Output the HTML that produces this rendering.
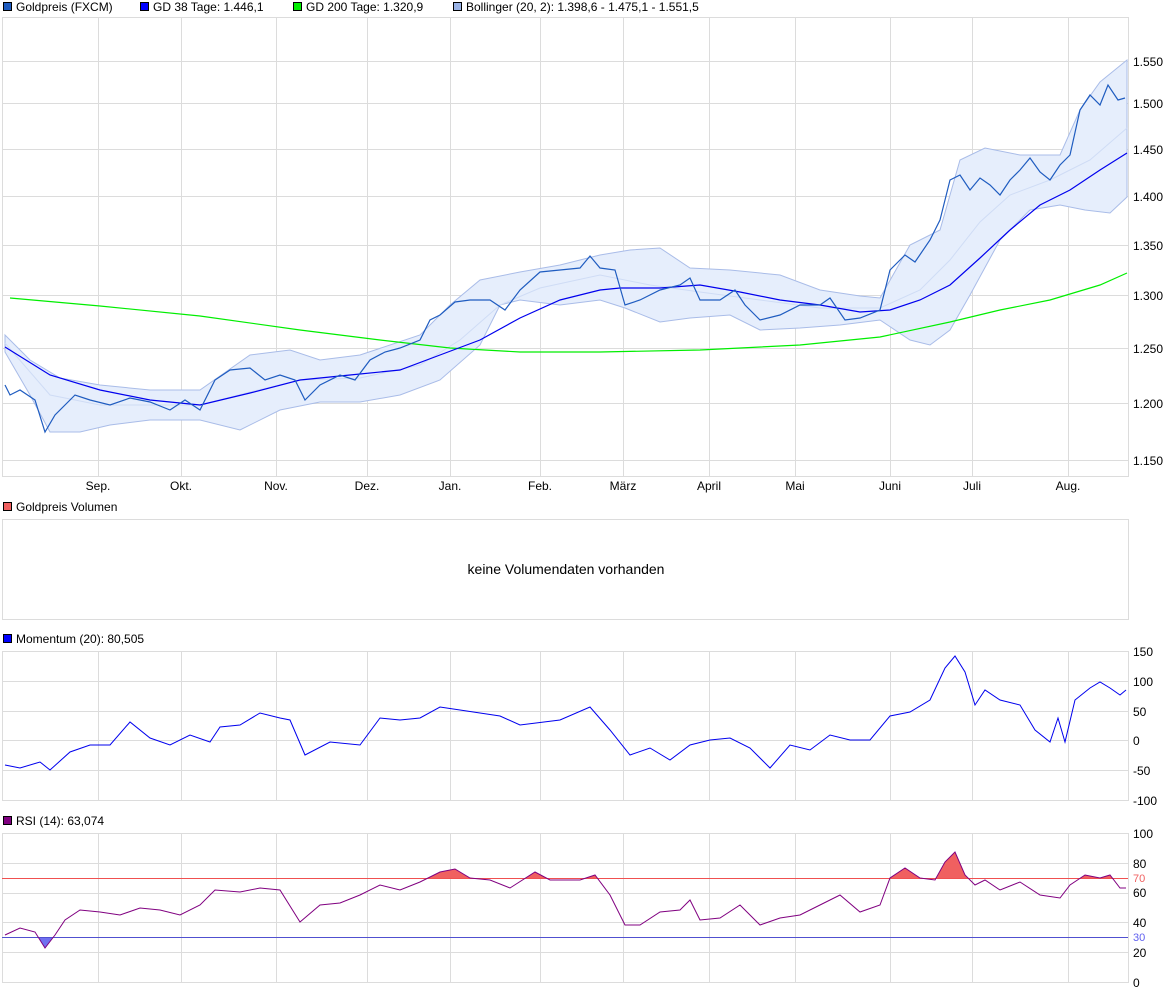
<!DOCTYPE html>
<html><head><meta charset="utf-8"><style>
body{margin:0;background:#fff;font-family:"Liberation Sans",sans-serif;}
svg text{font-family:"Liberation Sans",sans-serif;font-size:12px;fill:#000}
</style></head><body>
<svg width="1175" height="994" viewBox="0 0 1175 994" xmlns="http://www.w3.org/2000/svg">
<defs>
<clipPath id="above"><rect x="0" y="820" width="1130" height="58"/></clipPath>
<clipPath id="below"><rect x="0" y="937" width="1130" height="50"/></clipPath>
</defs>
<!-- legend -->
<rect x="3.5" y="2.5" width="8" height="8" fill="#1f5cc0" stroke="#000"/><text x="16" y="11">Goldpreis (FXCM)</text>
<rect x="140.5" y="2.5" width="8" height="8" fill="#0000ff" stroke="#000"/><text x="153" y="11">GD 38 Tage: 1.446,1</text>
<rect x="293.5" y="2.5" width="8" height="8" fill="#00ee00" stroke="#000"/><text x="306" y="11">GD 200 Tage: 1.320,9</text>
<rect x="453.5" y="2.5" width="8" height="8" fill="#9ab3e6" stroke="#000"/><text x="466" y="11">Bollinger (20, 2): 1.398,6 - 1.475,1 - 1.551,5</text>
<g stroke="#dcdcdc" stroke-width="1">
<rect x="2.5" y="17.5" width="1126" height="459" fill="none"/>
<rect x="2.5" y="519.5" width="1126" height="100" fill="none"/>
<rect x="2.5" y="651.5" width="1126" height="149" fill="none"/>
<rect x="2.5" y="833.5" width="1126" height="149" fill="none"/>
<path d="M98.5 17V476M181.5 17V476M276.5 17V476M367.5 17V476M450.5 17V476M540.5 17V476M623.5 17V476M709.5 17V476M795.5 17V476M890.5 17V476M972.5 17V476M1068.5 17V476"/>
<path d="M98.5 651V800M181.5 651V800M276.5 651V800M367.5 651V800M450.5 651V800M540.5 651V800M623.5 651V800M709.5 651V800M795.5 651V800M890.5 651V800M972.5 651V800M1068.5 651V800"/>
<path d="M98.5 833V982M181.5 833V982M276.5 833V982M367.5 833V982M450.5 833V982M540.5 833V982M623.5 833V982M709.5 833V982M795.5 833V982M890.5 833V982M972.5 833V982M1068.5 833V982"/>
<path d="M2 61.5H1128M2 103.5H1128M2 149.5H1128M2 196.5H1128M2 245.5H1128M2 295.5H1128M2 348.5H1128M2 403.5H1128M2 460.5H1128"/>
<path d="M2 681.5H1128M2 711.5H1128M2 740.5H1128M2 770.5H1128"/>
<path d="M2 863.5H1128M2 893.5H1128M2 922.5H1128M2 952.5H1128"/>
</g>
<!-- bollinger -->
<polygon fill="#e6eefc" stroke="#a9bce8" stroke-width="1" points="5,335 30,360 60,378 100,385 150,390 200,390 250,355 290,350 320,360 360,355 420,335 450,305 480,280 520,272 560,265 600,255 630,250 660,248 690,268 730,270 780,275 820,290 860,296 880,298 910,245 940,230 960,160 985,148 1020,155 1060,155 1080,110 1100,82 1127,60 1127,197 1110,213 1085,210 1060,205 1030,210 1000,240 970,295 950,330 930,345 910,340 880,320 840,325 800,328 760,330 730,315 690,318 660,322 625,308 600,300 560,305 520,300 500,305 480,345 440,380 400,395 360,402 320,402 280,410 240,430 200,420 150,420 110,425 80,432 50,432 30,395 5,352"/>
<polyline fill="none" stroke="#cfdcf5" stroke-width="1" points="5,343 50,395 100,405 150,405 200,405 250,392 300,380 360,378 420,365 460,340 500,305 540,288 600,275 650,285 700,292 760,300 820,308 880,308 920,290 950,260 980,222 1010,195 1050,180 1090,160 1127,128"/>
<polyline fill="none" stroke="#00ee00" stroke-width="1.2" points="10,298 100,306 200,316 300,330 380,340 450,348 520,352 600,352 700,350 800,345 880,337 950,322 1000,310 1050,300 1100,285 1127,273"/>
<polyline fill="none" stroke="#0000ee" stroke-width="1.2" points="5,347 50,375 100,390 150,400 200,405 250,393 300,380 350,375 400,370 440,355 480,340 520,318 560,300 600,290 620,288 660,288 700,285 740,292 780,300 820,305 860,312 890,310 920,300 950,285 980,258 1010,230 1040,205 1070,190 1100,170 1127,153"/>
<polyline fill="none" stroke="#1f5cc0" stroke-width="1.2" points="5,385 10,395 20,390 35,400 45,432 55,415 65,405 75,395 90,400 110,405 130,398 150,402 170,410 185,400 200,410 215,380 230,370 250,368 265,380 280,375 295,380 305,400 320,385 340,375 355,380 370,360 385,352 400,348 420,340 430,320 440,315 455,302 470,300 490,300 505,310 520,290 540,272 560,270 580,268 590,256 600,268 615,270 625,305 640,300 660,290 680,285 690,278 700,300 720,300 735,290 745,305 760,320 780,315 800,305 820,305 830,298 845,320 860,318 880,310 890,270 905,255 915,262 930,240 940,220 950,180 960,175 970,190 980,178 990,185 1000,195 1010,180 1020,170 1030,158 1040,172 1050,180 1060,165 1070,155 1080,110 1090,95 1100,105 1108,85 1118,100 1125,98"/>
<g>
<text x="1133" y="66">1.550</text><text x="1133" y="108">1.500</text><text x="1133" y="154">1.450</text><text x="1133" y="201">1.400</text><text x="1133" y="250">1.350</text><text x="1133" y="300">1.300</text><text x="1133" y="353">1.250</text><text x="1133" y="408">1.200</text><text x="1133" y="465">1.150</text>
</g>
<g text-anchor="middle">
<text x="98" y="490">Sep.</text><text x="181" y="490">Okt.</text><text x="276" y="490">Nov.</text><text x="367" y="490">Dez.</text><text x="450" y="490">Jan.</text><text x="540" y="490">Feb.</text><text x="623" y="490">März</text><text x="709" y="490">April</text><text x="795" y="490">Mai</text><text x="890" y="490">Juni</text><text x="972" y="490">Juli</text><text x="1068" y="490">Aug.</text>
</g>
<rect x="3.5" y="502.5" width="8" height="8" fill="#f06060" stroke="#000"/><text x="16" y="511">Goldpreis Volumen</text>
<text x="566" y="574" text-anchor="middle" style="font-size:14px">keine Volumendaten vorhanden</text>
<rect x="3.5" y="634.5" width="8" height="8" fill="#0000ff" stroke="#000"/><text x="16" y="643">Momentum (20): 80,505</text>
<polyline fill="none" stroke="#0000ee" stroke-width="1" points="5,765 20,768 40,762 50,770 70,752 90,745 110,745 130,722 150,738 170,745 190,735 210,742 220,727 240,725 260,713 280,718 290,720 305,755 330,742 360,745 380,718 400,720 420,718 440,707 460,710 480,713 500,716 520,725 560,720 590,707 610,730 630,755 650,748 670,760 690,745 710,740 730,738 750,748 770,768 790,745 810,750 830,735 850,740 870,740 890,716 910,712 930,700 945,668 955,656 965,672 975,705 985,690 1000,700 1020,705 1035,730 1050,742 1058,718 1065,742 1075,700 1090,688 1100,682 1110,688 1120,695 1126,690"/>
<g><text x="1133" y="656">150</text><text x="1133" y="686">100</text><text x="1133" y="716">50</text><text x="1133" y="745">0</text><text x="1133" y="775">-50</text><text x="1133" y="805">-100</text></g>
<rect x="3.5" y="816.5" width="8" height="8" fill="#800080" stroke="#000"/><text x="16" y="825">RSI (14): 63,074</text>
<polygon clip-path="url(#above)" fill="#f06060" points="5,878 5,935 20,928 35,932 45,948 55,935 65,920 80,910 100,912 120,915 140,908 160,910 180,915 200,905 215,890 240,892 260,888 280,890 300,922 320,905 340,903 360,895 380,885 400,890 420,882 440,872 455,869 470,878 490,880 510,888 535,872 550,880 580,880 595,875 610,895 625,925 640,925 660,912 680,910 690,900 700,920 720,918 740,905 760,925 780,918 800,915 820,905 840,895 860,912 880,905 890,878 905,868 920,878 935,880 945,862 955,852 965,875 975,885 985,880 1000,890 1020,882 1040,895 1060,898 1070,885 1085,875 1100,878 1110,875 1120,888 1126,888 1126,878"/>
<polygon clip-path="url(#below)" fill="#7070f0" points="5,937 5,935 20,928 35,932 45,948 55,935 65,937"/>
<line x1="2" y1="878.5" x2="1128" y2="878.5" stroke="#f05050"/>
<line x1="2" y1="937.5" x2="1128" y2="937.5" stroke="#5050d0"/>
<polyline fill="none" stroke="#800080" stroke-width="1" points="5,935 20,928 35,932 45,948 55,935 65,920 80,910 100,912 120,915 140,908 160,910 180,915 200,905 215,890 240,892 260,888 280,890 300,922 320,905 340,903 360,895 380,885 400,890 420,882 440,872 455,869 470,878 490,880 510,888 535,872 550,880 580,880 595,875 610,895 625,925 640,925 660,912 680,910 690,900 700,920 720,918 740,905 760,925 780,918 800,915 820,905 840,895 860,912 880,905 890,878 905,868 920,878 935,880 945,862 955,852 965,875 975,885 985,880 1000,890 1020,882 1040,895 1060,898 1070,885 1085,875 1100,878 1110,875 1120,888 1126,888"/>
<g><text x="1133" y="838">100</text><text x="1133" y="868">80</text><text x="1133" y="897">60</text><text x="1133" y="927">40</text><text x="1133" y="957">20</text><text x="1133" y="987">0</text>
<text x="1133" y="882" style="fill:#f06060;font-size:11px">70</text><text x="1133" y="941" style="fill:#6060f0;font-size:11px">30</text></g>
</svg>
</body></html>
